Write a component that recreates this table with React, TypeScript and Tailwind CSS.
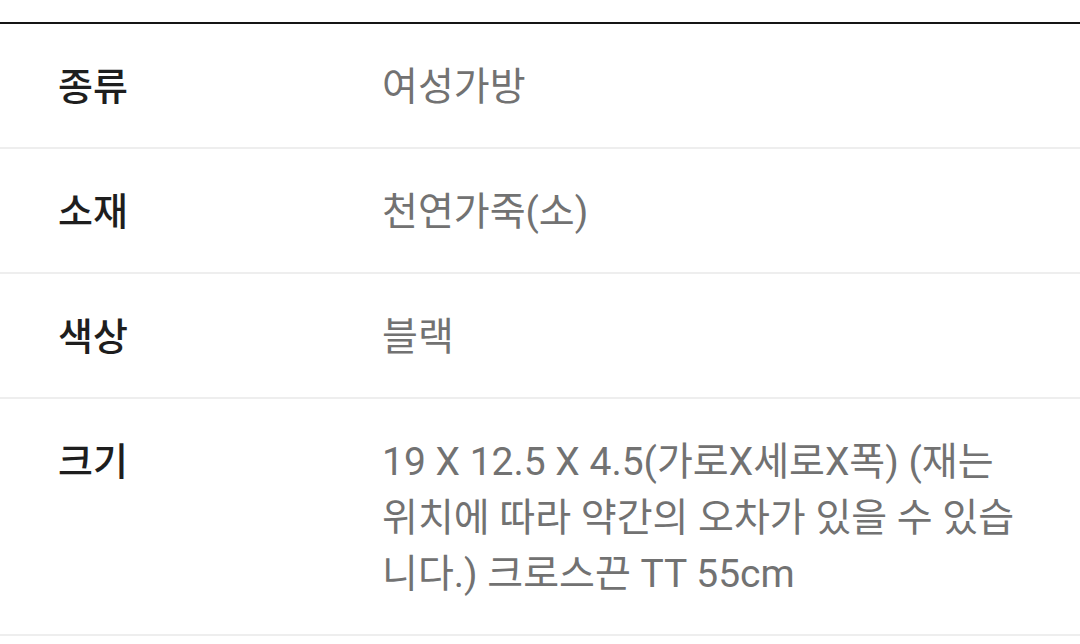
import React from "react";

const rows: { label: string; value: string }[] = [
  { label: "종류", value: "여성가방" },
  { label: "소재", value: "천연가죽(소)" },
  { label: "색상", value: "블랙" },
  {
    label: "크기",
    value:
      "19 X 12.5 X 4.5(가로X세로X폭) (재는 위치에 따라 약간의 오차가 있을 수 있습니다.) 크로스끈 TT 55cm",
  },
];

export default function App() {
  return (
    <div
      className="w-[1080px] h-[644px] bg-white pt-[22px] overflow-hidden"
      style={{ fontFamily: "Roboto, 'Noto Sans CJK KR', sans-serif" }}
    >
      <div className="border-t-2 border-[#151515]">
        {rows.map((r) => (
          <div key={r.label} className="flex border-b-2 border-[#eeeeee] pt-[35px] pb-[32px]">
            <div className="w-[382px] shrink-0 pl-[58px] text-[38px] leading-[56px] font-medium text-[#1e1e1e]">
              {r.label}
            </div>
            <div className="w-[650px] shrink-0 text-[39px] leading-[56px] text-[#727272]">
              {r.value}
            </div>
          </div>
        ))}
      </div>
    </div>
  );
}
